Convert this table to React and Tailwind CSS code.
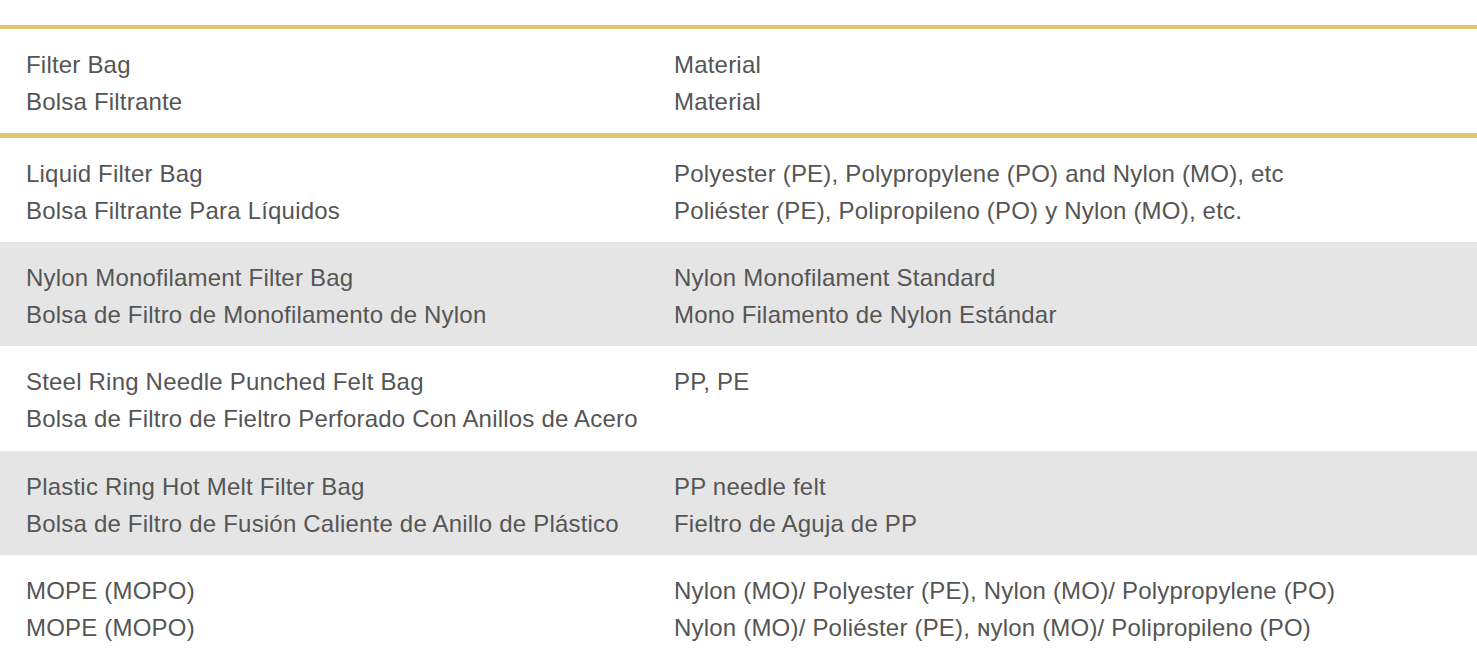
const header = ["Filter Bag", "Bolsa Filtrante", "Material", "Material"];

const rows = [
  ["Liquid Filter Bag", "Bolsa Filtrante Para Líquidos", "Polyester (PE), Polypropylene (PO) and Nylon (MO), etc", "Poliéster (PE), Polipropileno (PO) y Nylon (MO), etc."],
  ["Nylon Monofilament Filter Bag", "Bolsa de Filtro de Monofilamento de Nylon", "Nylon Monofilament Standard", "Mono Filamento de Nylon Estándar"],
  ["Steel Ring Needle Punched Felt Bag", "Bolsa de Filtro de Fieltro Perforado Con Anillos de Acero", "PP, PE", ""],
  ["Plastic Ring Hot Melt Filter Bag", "Bolsa de Filtro de Fusión Caliente de Anillo de Plástico", "PP needle felt", "Fieltro de Aguja de PP"],
  ["MOPE (MOPO)", "MOPE (MOPO)", "Nylon (MO)/ Polyester (PE), Nylon (MO)/ Polypropylene (PO)", "Nylon (MO)/ Poliéster (PE), ɴylon (MO)/ Polipropileno (PO)"],
];

function Cell({ a, b, first }) {
  return (
    <div className={first ? "pl-[26px]" : ""}>
      <div>{a}</div>
      <div>{b || "\u00a0"}</div>
    </div>
  );
}

export default function App() {
  return (
    <div
      className="h-screen overflow-hidden bg-white text-[24px] leading-[37px] tracking-[0.2px] text-[#555555]"
      style={{ fontFamily: '"Liberation Sans", Arial, sans-serif' }}
    >
      <div className="mt-[25px] border-t-4 border-b-[5px] border-[#e3c76b]">
        <div className="grid grid-cols-[674px_1fr] h-[104px] pt-[17px]">
          <Cell a={header[0]} b={header[1]} first />
          <Cell a={header[2]} b={header[3]} />
        </div>
      </div>
      {rows.map((r, i) => (
        <div
          key={i}
          className={
            "grid grid-cols-[674px_1fr] pt-[17px] " +
            (i === 2 ? "h-[105px] " : "h-[104px] ") +
            (i % 2 === 1 ? "bg-[#e5e5e5]" : "bg-white")
          }
        >
          <Cell a={r[0]} b={r[1]} first />
          <Cell a={r[2]} b={r[3]} />
        </div>
      ))}
    </div>
  );
}
